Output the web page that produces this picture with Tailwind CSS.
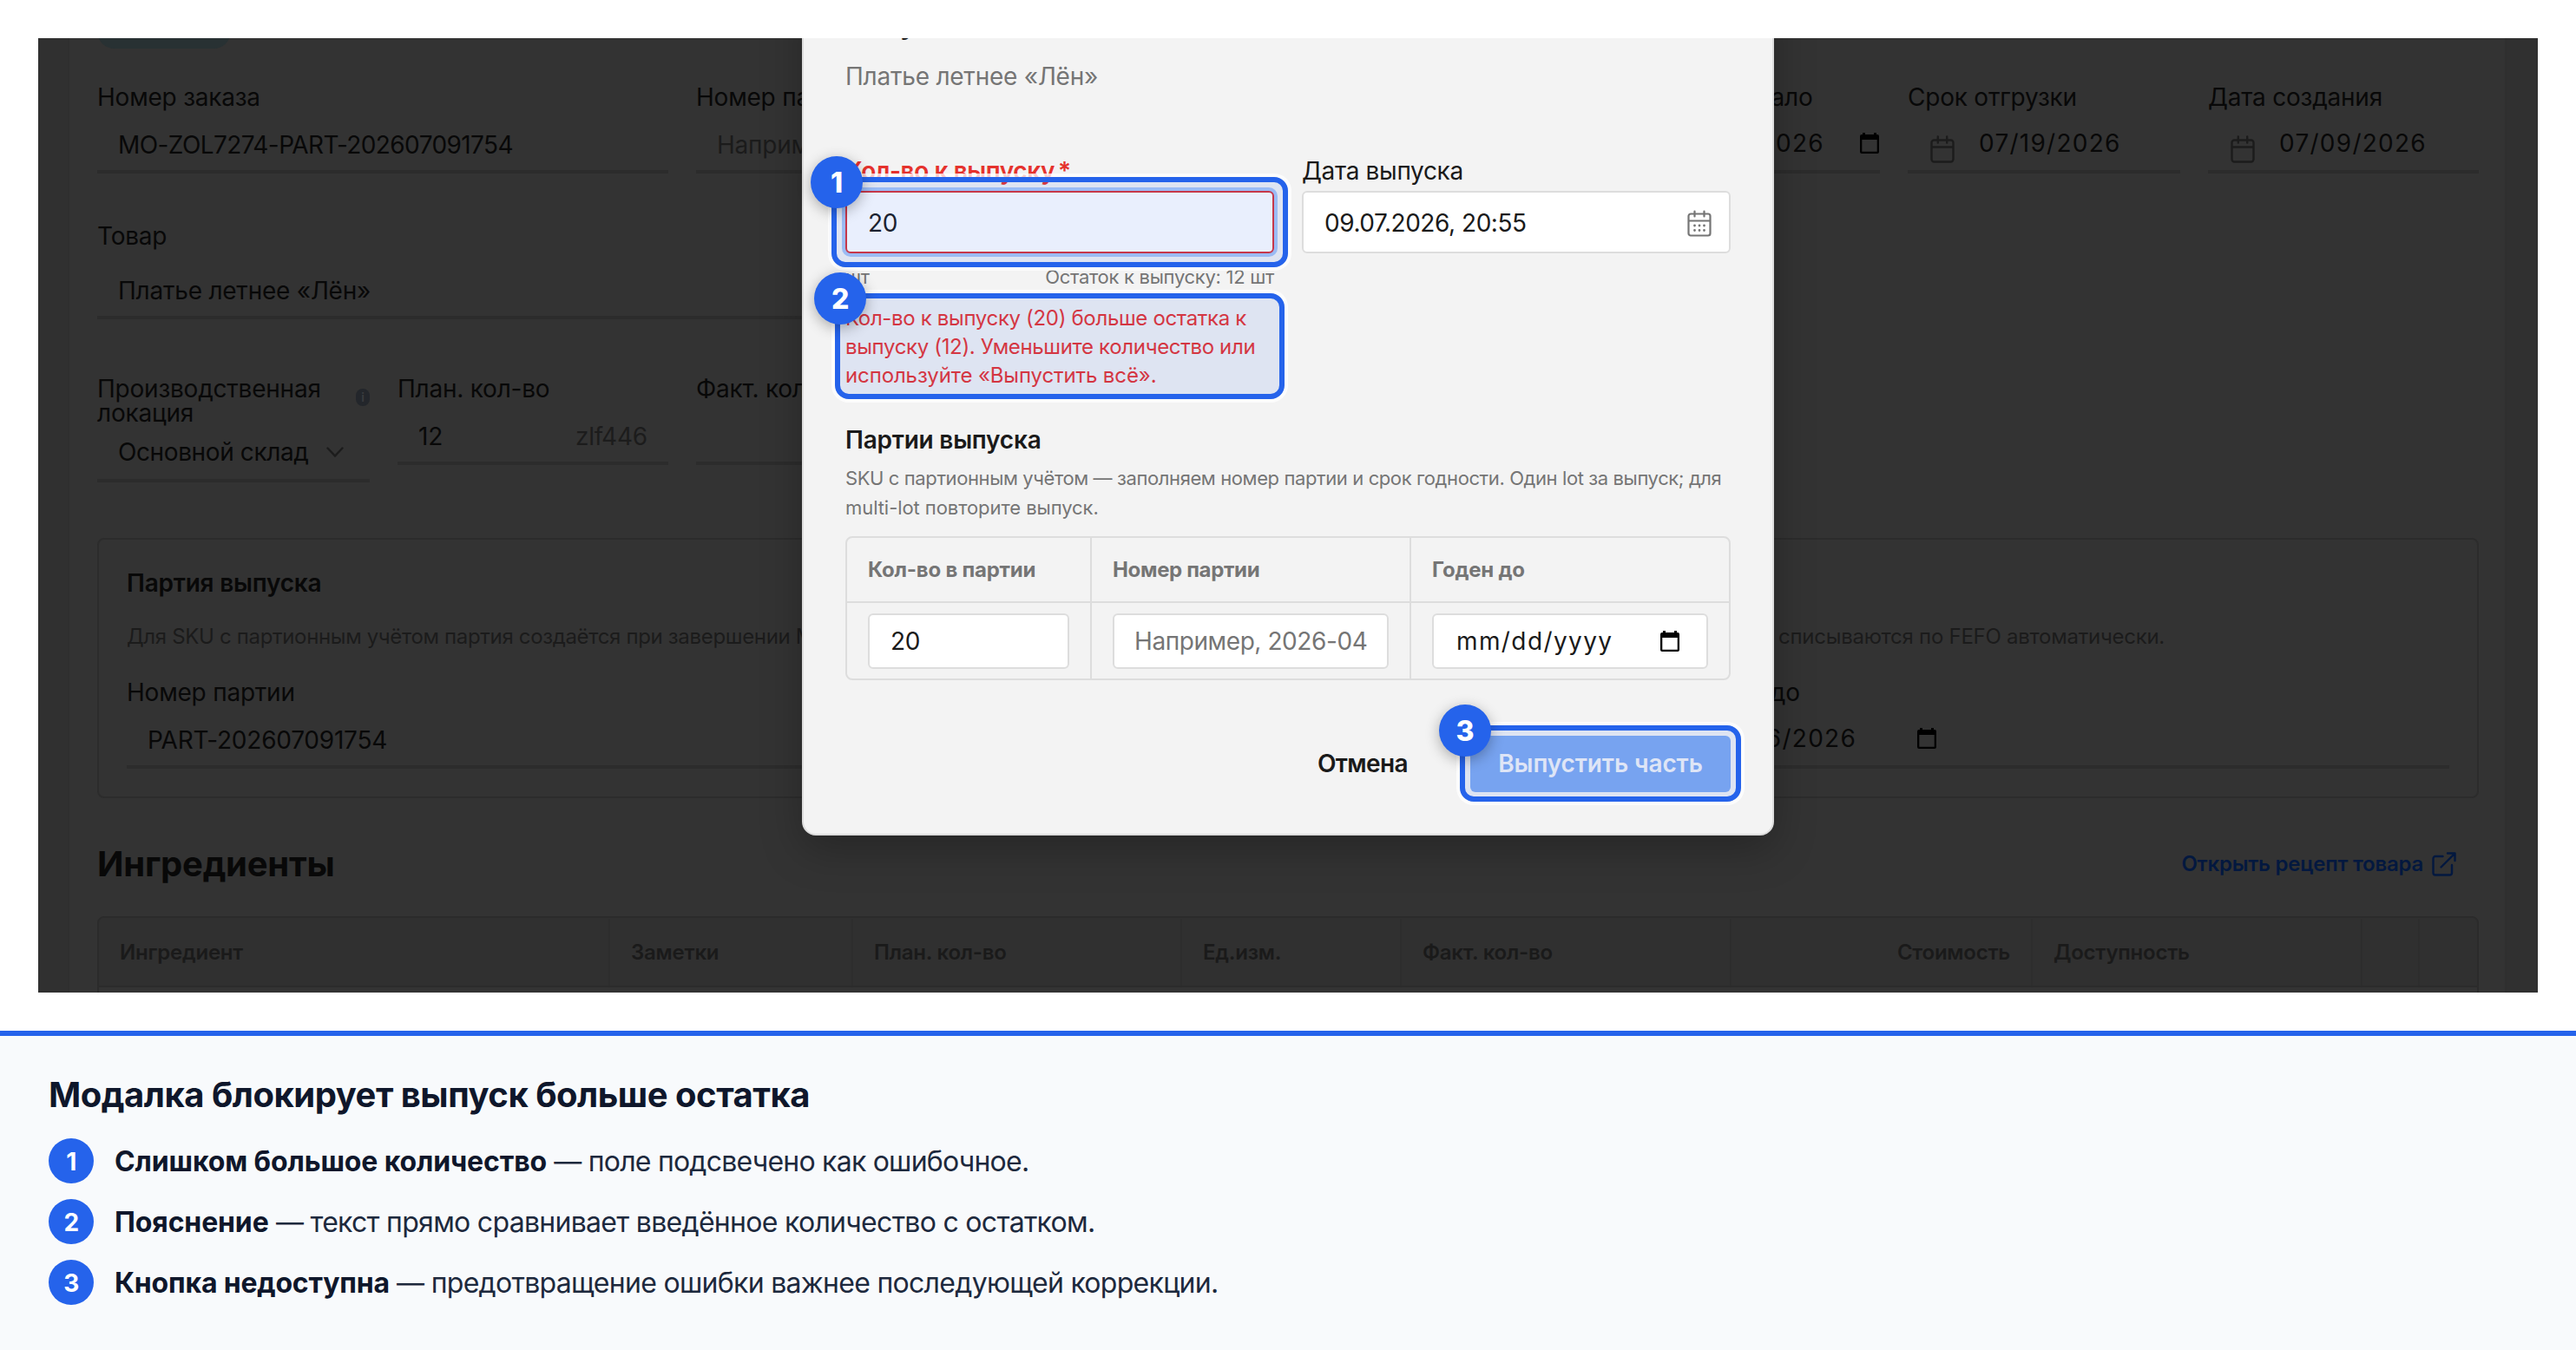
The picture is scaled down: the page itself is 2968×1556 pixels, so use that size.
<!DOCTYPE html>
<html lang="ru">
<head>
  <meta charset="UTF-8" />
  <meta name="viewport" content="width=device-width, initial-scale=1.0" />
  <title>Модалка блокирует выпуск больше остатка</title>
  <script src="https://cdn.jsdelivr.net/npm/@tailwindcss/browser@4"></script>
</head>
<body class="bg-white w-[2968px] h-[1556px] overflow-hidden font-['Inter',sans-serif]">

  <!-- Shared icons -->
  <svg class="hidden">
    <symbol id="calendar" viewBox="0 0 28 32">
      <path d="M4.5 5.5h19a3 3 0 0 1 3 3v19a3 3 0 0 1-3 3h-19a3 3 0 0 1-3-3v-19a3 3 0 0 1 3-3zM1.500 13.500h25M8.800 1.500v7M19.200 1.500v7" fill="none" stroke="currentColor" stroke-width="2.400" stroke-linecap="round" />
    </symbol>
    <symbol id="picker" viewBox="0 0 22 24">
      <path d="M3 0h3v2h10V0h3v2h1a2 2 0 0 1 2 2v18a2 2 0 0 1-2 2H2a2 2 0 0 1-2-2V4a2 2 0 0 1 2-2h1zM2.300 8v13.700h17.400V8z" fill="currentColor" fill-rule="evenodd" />
    </symbol>
  </svg>

  <div class="relative m-11 h-[1100px] w-[2880px] overflow-hidden bg-[#303030] text-[28px] tracking-[-0.008em] text-[#080808]">

    <!-- Order page behind the overlay -->
    <div class="ml-[34px] flow-root w-[2810px] h-full border-x-2 border-[#2f2f2f] bg-[#333333] pl-8 pr-[30px]">
      <div class="-mt-7 h-10 w-[154px] rounded-full bg-[#283133]"></div>

      <div class="mt-[42px] flex gap-8">
        <div class="w-[658px]">
          <div class="leading-7">Номер заказа</div>
          <div class="flex h-[74px] items-center border-b-4 border-[#2c2c2c] pl-6 pt-[11px] tracking-[-0.021em]">MO-ZOL7274-PART-202607091754</div>
        </div>
        <div class="flex-1">
          <div class="leading-7">Номер партии</div>
          <div class="flex h-[74px] items-center border-b-4 border-[#2c2c2c] pl-6 pt-[11px] text-[#1b1b1b]">Например, 2026-04</div>
        </div>
        <div class="w-[314px]">
          <div class="leading-7">Плановое начало</div>
          <div class="flex h-[74px] items-center border-b-4 border-[#2c2c2c] pl-[80px] pt-[7px] tracking-[0.045em]">
            <span class="w-[211px]">07/09/2026</span>
            <svg class="h-6 w-[22px] shrink-0 text-black"><use href="#picker" /></svg>
          </div>
        </div>
        <div class="w-[314px]">
          <div class="leading-7">Срок отгрузки</div>
          <div class="flex h-[74px] items-center border-b-4 border-[#2c2c2c] pl-[26px] pt-[7px] tracking-[0.045em]">
            <svg class="mt-[15px] mr-7 h-8 w-7 text-[#1c1c1c]"><use href="#calendar" /></svg>
            07/19/2026
          </div>
        </div>
        <div class="w-[312px]">
          <div class="leading-7">Дата создания</div>
          <div class="flex h-[74px] items-center border-b-4 border-[#2c2c2c] pl-[26px] pt-[7px] tracking-[0.045em]">
            <svg class="mt-[15px] mr-7 h-8 w-7 text-[#1c1c1c]"><use href="#calendar" /></svg>
            07/09/2026
          </div>
        </div>
      </div>

      <div class="mt-[58px] w-[1708px]">
        <div class="leading-7">Товар</div>
        <div class="flex h-[82px] items-center border-b-4 border-[#2c2c2c] pl-6 pt-[19px]">Платье летнее «Лён»</div>
      </div>

      <div class="mt-[66px] flex gap-8">
        <div class="w-[314px]">
          <div class="flex items-start justify-between leading-7">
            <span class="w-[270px]">Производственная локация</span>
            <span class="mt-[14px] flex h-5 w-4 items-center justify-center rounded-full bg-[#23262b] text-[14px] font-semibold text-[#3a3c3f]">i</span>
          </div>
          <div class="flex h-[66px] items-center border-b-4 border-[#2c2c2c] pl-6 tracking-[-0.014em]">
            <span class="w-[240px]">Основной склад</span>
            <svg class="h-3 w-5 text-[#1c1c1c]" viewBox="0 0 20 12" fill="none" stroke="currentColor" stroke-width="2.400" stroke-linecap="round"><path d="M1.500 1.500 10 10.500 18.500 1.500" /></svg>
          </div>
        </div>
        <div class="w-[312px]">
          <div class="leading-7">План. кол-во</div>
          <div class="flex h-[74px] items-center justify-between border-b-4 border-[#2c2c2c] pl-6 pr-6 pt-[11px]">
            <span>12</span>
            <span class="text-[#1c1c1c]">zlf446</span>
          </div>
        </div>
        <div class="w-[1018px]">
          <div class="leading-7">Факт. кол-во</div>
          <div class="h-[74px] border-b-4 border-[#2c2c2c]"></div>
        </div>
      </div>

      <div class="mt-16 h-[300px] rounded-lg border-2 border-[#2c2c2c] px-8 pt-9">
        <div class="font-semibold leading-7">Партия выпуска</div>
        <div class="mt-[31px] flex w-[2348px] justify-between whitespace-nowrap text-[24px] leading-[34px] tracking-[-0.014em] text-[#1b1b1b]">
          <span>Для SKU с партионным учётом партия создаётся при завершении МО. Партии сырья</span>
          <span class="tracking-[-0.011em]">списываются по FEFO автоматически.</span>
        </div>
        <div class="mt-[33px] flex gap-8">
          <div class="w-[1774px]">
            <div class="leading-7">Номер партии</div>
            <div class="flex h-[74px] items-center border-b-4 border-[#2c2c2c] pl-6 pt-[11px]">PART-202607091754</div>
          </div>
          <div class="flex-1">
            <div class="leading-7">Годен до</div>
            <div class="flex h-[74px] items-center border-b-4 border-[#2c2c2c] pl-[21px] pt-[7px] tracking-[0.045em]">
              <span class="w-[236px]">10/06/2026</span>
              <svg class="h-6 w-[22px] text-black"><use href="#picker" /></svg>
            </div>
          </div>
        </div>
      </div>

      <div class="mt-[52px] flex h-12 items-center justify-between pr-[26px]">
        <h2 class="text-[40px] font-bold leading-[48px] tracking-[-0.006em]">Ингредиенты</h2>
        <a class="flex items-center gap-[10px] text-[24px] font-semibold tracking-[-0.01em] text-[#03183f]">
          Открыть рецепт товара
          <svg class="h-7 w-7" viewBox="0 0 28 28" fill="none" stroke="currentColor" stroke-width="2.400" stroke-linecap="round" stroke-linejoin="round"><path d="M12.500 5H4a2.500 2.500 0 0 0-2.500 2.500V24A2.500 2.500 0 0 0 4 26.500h16.500A2.500 2.500 0 0 0 23 24v-9M18 1.500h8.500V10M26 2 10.500 17.500" /></svg>
        </a>
      </div>

      <div class="mt-9 h-[120px] overflow-hidden rounded-t-lg border-2 border-[#2b2b2b]">
        <div class="flex h-20 border-b-2 border-[#2b2b2b] bg-[#303030] pt-px text-[24px] font-semibold text-[#1a1a1a]">
          <div class="flex w-[589px] items-center border-r-2 border-[#2d2d2d] pl-6">Ингредиент</div>
          <div class="flex w-[280px] items-center border-r-2 border-[#2d2d2d] pl-6">Заметки</div>
          <div class="flex w-[379px] items-center border-r-2 border-[#2d2d2d] pl-6">План. кол-во</div>
          <div class="flex w-[253px] items-center border-r-2 border-[#2d2d2d] pl-6">Ед.изм.</div>
          <div class="flex w-[380px] items-center border-r-2 border-[#2d2d2d] pl-6">Факт. кол-во</div>
          <div class="flex w-[347px] items-center justify-end border-r-2 border-[#2d2d2d] pr-6">Стоимость</div>
          <div class="flex w-[380px] items-center border-r-2 border-[#2d2d2d] pl-6">Доступность</div>
          <div class="w-[66px] border-r-2 border-[#2d2d2d]"></div>
        </div>
      </div>
    </div>

    <!-- Modal -->
    <div class="absolute left-[880px] top-[-60px] h-[979px] w-[1120px] rounded-2xl border-2 border-[#dddddd] bg-[#f3f3f3] px-12 pt-[22px] text-[#1a1a1a] shadow-[0_16px_48px_rgba(0,0,0,0.25)]">
      <h3 class="text-[32px] font-semibold leading-10 tracking-[-0.02em]">Выпуск</h3>
      <div class="mt-[22px] leading-9 text-[#757575]">Платье летнее «Лён»</div>

      <div class="mt-[77px] flex gap-8">
        <div class="w-[494px]">
          <div class="font-semibold leading-7 tracking-[-0.015em] text-[#e5322d]">Кол-во к выпуску<span class="ml-1">*</span></div>
          <div class="mt-[9px] flex h-[72px] items-center rounded-md border-2 border-[#d93338] bg-white pl-6 pt-[2px] ring-4 ring-[#a9c6f5]">20</div>
          <div class="mt-[13px] flex justify-between text-[22px] leading-7 tracking-[-0.013em] text-[#757575]">
            <span>шт</span>
            <span>Остаток к выпуску: 12 шт</span>
          </div>
          <div class="mt-[17px] whitespace-nowrap text-[24px] leading-[33px] tracking-[-0.014em] text-[#e8322f]">
            Кол-во к выпуску (20) больше остатка к<br />
            выпуску (12). Уменьшите количество или<br />
            <span class="tracking-[-0.005em]">используйте «Выпустить всё».</span>
          </div>
        </div>
        <div class="w-[494px]">
          <div class="leading-7 tracking-[-0.012em]">Дата выпуска</div>
          <div class="mt-[9px] flex h-[72px] items-center justify-between rounded-md border-2 border-[#dddddd] bg-white pl-6 pr-5 pt-[2px] tracking-[-0.016em]">
            09.07.2026, 20:55
            <svg class="h-[31px] w-7 text-[#757575]" viewBox="0 0 28 31" fill="none" stroke="currentColor" stroke-width="2.200" stroke-linecap="round">
              <path d="M4 4.500h20a2.500 2.500 0 0 1 2.500 2.500v20a2.500 2.500 0 0 1-2.500 2.500H4A2.500 2.500 0 0 1 1.500 27V7A2.500 2.500 0 0 1 4 4.500zM1.500 12.500h25M8.500 1.500v6M19.500 1.500v6" />
              <path d="M8.500 18h.01M14 18h.01M19.500 18h.01M8.500 23.500h.01M14 23.500h.01M19.500 23.500h.01" stroke-width="2.800" />
            </svg>
          </div>
        </div>
      </div>

      <div class="mt-11 font-semibold leading-7">Партии выпуска</div>
      <div class="mt-[13px] whitespace-nowrap text-[22px] leading-[34px] tracking-[-0.018em] text-[#757575]">
        SKU с партионным учётом — заполняем номер партии и срок годности. Один lot за выпуск; для<br />
        <span class="tracking-[-0.003em]">multi-lot повторите выпуск.</span>
      </div>

      <div class="mt-4 rounded-lg border-2 border-[#dddddd]">
        <div class="flex h-[75px] border-b-2 border-[#dddddd] text-[24px] font-bold text-[#757575]">
          <div class="flex w-[282px] items-center border-r-2 border-[#dddddd] px-6">Кол-во в партии</div>
          <div class="flex w-[368px] items-center border-r-2 border-[#dddddd] px-6 tracking-[-0.014em]">Номер партии</div>
          <div class="flex flex-1 items-center px-6">Годен до</div>
        </div>
        <div class="flex h-[87px]">
          <div class="flex w-[282px] items-center border-r-2 border-[#dddddd] px-6">
            <div class="flex h-16 w-full items-center rounded-md border-2 border-[#dddddd] bg-white pl-6">20</div>
          </div>
          <div class="flex w-[368px] items-center border-r-2 border-[#dddddd] px-6">
            <div class="flex h-16 w-full items-center whitespace-nowrap rounded-md border-2 border-[#dddddd] bg-white pl-[23px] tracking-[-0.015em] text-[#757575]">Например, 2026-04</div>
          </div>
          <div class="flex flex-1 items-center px-6">
            <div class="flex h-16 w-full items-center justify-between rounded-md border-2 border-[#dddddd] bg-white pl-[26px] pr-[31px] tracking-[0.05em]">
              mm/dd/yyyy
              <svg class="h-6 w-[22px] text-black"><use href="#picker" /></svg>
            </div>
          </div>
        </div>
      </div>

      <div class="mt-16 flex h-16 items-center justify-end gap-[72px] font-semibold">
        <span class="tracking-[-0.022em]">Отмена</span>
        <button class="h-[65px] w-[300px] rounded-md bg-[#81abf1] tracking-[-0.004em] text-[#f3f4f8]">Выпустить часть</button>
      </div>
    </div>

    <!-- Numbered callouts -->
    <div class="absolute left-[914px] top-[160px] h-[104px] w-[526px] rounded-2xl border-6 border-[#2563eb] bg-[#2563eb]/10 bg-clip-padding ring-4 ring-white/75"></div>
    <div class="absolute left-[918px] top-[294px] h-[122px] w-[518px] rounded-2xl border-6 border-[#2563eb] bg-[#2563eb]/10 bg-clip-padding ring-4 ring-white/75"></div>
    <div class="absolute left-[1638px] top-[792px] h-[88px] w-[324px] rounded-2xl border-6 border-[#2563eb] bg-[#2563eb]/10 bg-clip-padding ring-4 ring-white/75"></div>
    <div class="absolute left-[890px] top-[136px] flex size-[60px] items-center justify-center rounded-full bg-[#2563eb] pt-px text-[32px] font-extrabold text-white shadow-[0_4px_16px_rgba(0,0,0,0.3)]">1</div>
    <div class="absolute left-[894px] top-[270px] flex size-[60px] items-center justify-center rounded-full bg-[#2563eb] pt-px text-[32px] font-extrabold text-white shadow-[0_4px_16px_rgba(0,0,0,0.3)]">2</div>
    <div class="absolute left-[1614px] top-[768px] flex size-[60px] items-center justify-center rounded-full bg-[#2563eb] pt-px text-[32px] font-extrabold text-white shadow-[0_4px_16px_rgba(0,0,0,0.3)]">3</div>
  </div>

  <!-- Legend -->
  <div class="h-[368px] border-t-6 border-[#2563eb] bg-slate-50 px-14 pt-[43px] text-[32px] text-slate-800">
    <h1 class="text-[40px] font-bold leading-[49px] tracking-[-0.0125em] text-slate-900">Модалка блокирует выпуск больше остатка</h1>
    <ol class="mt-[26px] flex flex-col gap-[18px] tracking-[-0.024em]">
      <li class="flex h-[52px] items-center gap-6">
        <span class="flex size-[52px] items-center justify-center rounded-full bg-[#2563eb] pt-[2px] text-[28px] font-bold text-white">1</span>
        <span class="pt-[2px]"><b class="font-bold tracking-[-0.004em] text-slate-900">Слишком большое количество</b> — поле подсвечено как ошибочное.</span>
      </li>
      <li class="flex h-[52px] items-center gap-6">
        <span class="flex size-[52px] items-center justify-center rounded-full bg-[#2563eb] pt-[2px] text-[28px] font-bold text-white">2</span>
        <span class="pt-[2px] tracking-[-0.022em]"><b class="font-bold tracking-[-0.004em] text-slate-900">Пояснение</b> — текст прямо сравнивает введённое количество с остатком.</span>
      </li>
      <li class="flex h-[52px] items-center gap-6">
        <span class="flex size-[52px] items-center justify-center rounded-full bg-[#2563eb] pt-[2px] text-[28px] font-bold text-white">3</span>
        <span class="pt-[2px] tracking-[-0.022em]"><b class="font-bold tracking-[-0.006em] text-slate-900">Кнопка недоступна</b> — предотвращение ошибки важнее последующей коррекции.</span>
      </li>
    </ol>
  </div>
</body>
</html>
